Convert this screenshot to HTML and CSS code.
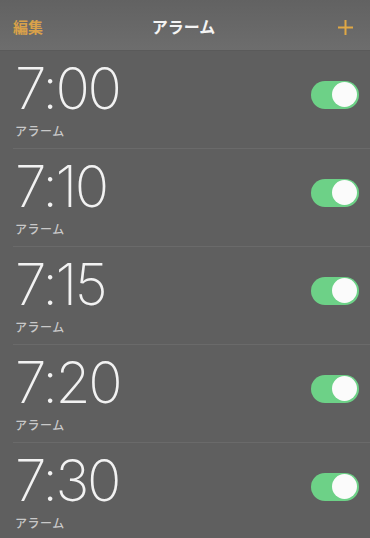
FILE: index.html
```html
<!DOCTYPE html>
<html lang="ja">
<head>
<meta charset="utf-8">
<link rel="stylesheet" href="styles.css">
</head>
<body>
<div class="app">
  <header class="nav">
    <span class="nav-edit">編集</span>
    <span class="nav-title">アラーム</span>
    <span class="nav-add" aria-label="追加">
      <svg width="17" height="17" viewBox="0 0 17 17"><path d="M8.5 1v15M1 8.5h15" stroke="#e0a845" stroke-width="2" fill="none"/></svg>
    </span>
  </header>
  <ul class="list">
    <li class="row"><div class="info"><div class="time">7:00</div><div class="label">アラーム</div></div><span class="switch"><span class="knob"></span></span></li>
    <li class="row"><div class="info"><div class="time">7:10</div><div class="label">アラーム</div></div><span class="switch"><span class="knob"></span></span></li>
    <li class="row"><div class="info"><div class="time">7:15</div><div class="label">アラーム</div></div><span class="switch"><span class="knob"></span></span></li>
    <li class="row"><div class="info"><div class="time">7:20</div><div class="label">アラーム</div></div><span class="switch"><span class="knob"></span></span></li>
    <li class="row"><div class="info"><div class="time">7:30</div><div class="label">アラーム</div></div><span class="switch"><span class="knob"></span></span></li>
  </ul>
</div>
</body>
</html>
```
FILE: styles.css
```css
html, body {
  margin: 0;
  padding: 0;
  background: #5f5f5f;
  overflow: hidden;
}
.app {
  width: 370px;
  height: 538px;
  font-family: "Noto Sans CJK JP", "Noto Sans", sans-serif;
}
.nav {
  height: 50px;
  display: grid;
  grid-template-columns: 1fr auto 1fr;
  align-items: center;
  padding: 0 16px 0 13px;
  background: linear-gradient(#626262, #6d6d6d);
  border-bottom: 1px solid #5a5a5a;
  box-sizing: content-box;
}
.nav-edit {
  color: #d9a14a;
  font-size: 15px;
  font-weight: 600;
  justify-self: start;
  padding-top: 2px;
}
.nav-title {
  color: #f4f4f4;
  font-size: 16px;
  font-weight: 600;
  padding-top: 2px;
}
.nav-add {
  justify-self: end;
  display: flex;
  padding-top: 4px;
}
.list {
  list-style: none;
  margin: 0;
  padding: 0 0 0 13px;
}
.row {
  height: 97px;
  border-bottom: 1px solid #6a6a6a;
  display: flex;
  align-items: center;
  justify-content: space-between;
  padding-right: 11px;
}
.info {
  padding-left: 2px;
  padding-top: 0;
}
.time {
  font-family: Inter, Roboto, "Liberation Sans", sans-serif;
  font-weight: 170;
  font-size: 57px;
  line-height: 58px;
  color: #f2f2f2;
  letter-spacing: -2.4px;
}
.label {
  font-size: 12px;
  font-weight: 500;
  color: #c9c9c9;
  margin-top: 4px;
  letter-spacing: 0.5px;
}
.switch {
  width: 48px;
  height: 28px;
  border-radius: 14px;
  background: #6dd187;
  display: flex;
  align-items: center;
  justify-content: flex-end;
  padding: 0 2px;
  box-sizing: border-box;
  margin-top: -10px;
}
.knob {
  width: 25px;
  height: 25px;
  border-radius: 50%;
  background: #fbfbfb;
}
```
